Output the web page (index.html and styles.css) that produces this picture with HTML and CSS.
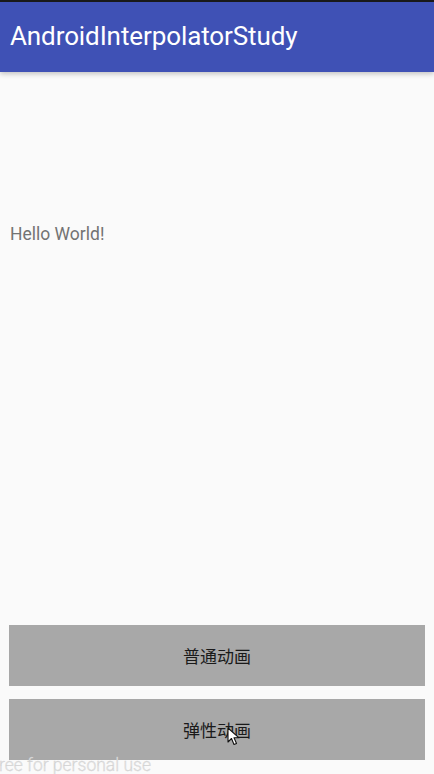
FILE: index.html
```html
<!DOCTYPE html>
<html>
<head>
<meta charset="utf-8">
<link rel="stylesheet" href="styles.css">
</head>
<body>
<div class="screen">
  <div class="statusline"></div>
  <header class="toolbar">
    <h1 class="title">AndroidInterpolatorStudy</h1>
  </header>
  <main class="content">
    <p class="hello">Hello World!</p>
    <div class="buttons">
      <button class="btn">普通动画</button>
      <button class="btn">弹性动画</button>
    </div>
  </main>
  <div class="watermark">ree for personal use</div>
  <svg class="cursor" width="14" height="20" viewBox="0 0 14 20">
    <path d="M1 1 L1 15 L4.5 11.5 L7 17.5 L9.5 16.5 L7 10.8 L12 10.8 Z" fill="#fff" stroke="#111" stroke-width="1.1" stroke-linejoin="round"/>
  </svg>
</div>
</body>
</html>
```
FILE: styles.css
```css
html, body {
  margin: 0;
  padding: 0;
}
body {
  width: 434px;
  height: 774px;
  overflow: hidden;
  background: #fafafa;
  font-family: Roboto, "Noto Sans CJK SC", sans-serif;
}
.screen {
  position: relative;
  width: 434px;
  height: 774px;
  display: flex;
  flex-direction: column;
}
.statusline {
  height: 2px;
  background: #1a1a1a;
}
.toolbar {
  height: 70px;
  background: #3f51b5;
  display: flex;
  align-items: center;
  padding-left: 10px;
  box-shadow: 0 2px 5px rgba(0,0,0,0.22);
  position: relative;
  z-index: 1;
}
.title {
  margin: 0;
  margin-top: -2px;
  color: #fff;
  font-family: Roboto, sans-serif;
  font-weight: 400;
  font-size: 26px;
  letter-spacing: -0.1px;
}
.content {
  flex: 1;
  display: flex;
  flex-direction: column;
  padding: 0 9px 0 9px;
}
.hello {
  margin: 152px 0 0 1px;
  color: #737373;
  font-size: 17.5px;
  line-height: 21px;
  font-family: Roboto, sans-serif;
}
.buttons {
  margin-top: auto;
  margin-bottom: 14px;
  display: flex;
  flex-direction: column;
  gap: 13px;
}
.btn {
  height: 61px;
  width: 100%;
  border: none;
  background: #a8a8a8;
  color: #1a1a1a;
  font-family: "Noto Sans CJK SC", sans-serif;
  font-size: 17px;
  padding: 0;
  margin: 0;
  display: flex;
  align-items: center;
  justify-content: center;
}
.watermark {
  position: absolute;
  left: 0;
  bottom: 0;
  color: #e2e2e2;
  font-family: Roboto, sans-serif;
  font-weight: 300;
  font-size: 17.5px;
  line-height: 18px;
  margin-left: -1px;
  -webkit-text-stroke: 0.3px #cfcfcf;
}
.cursor {
  position: absolute;
  left: 227px;
  top: 727px;
}
```
